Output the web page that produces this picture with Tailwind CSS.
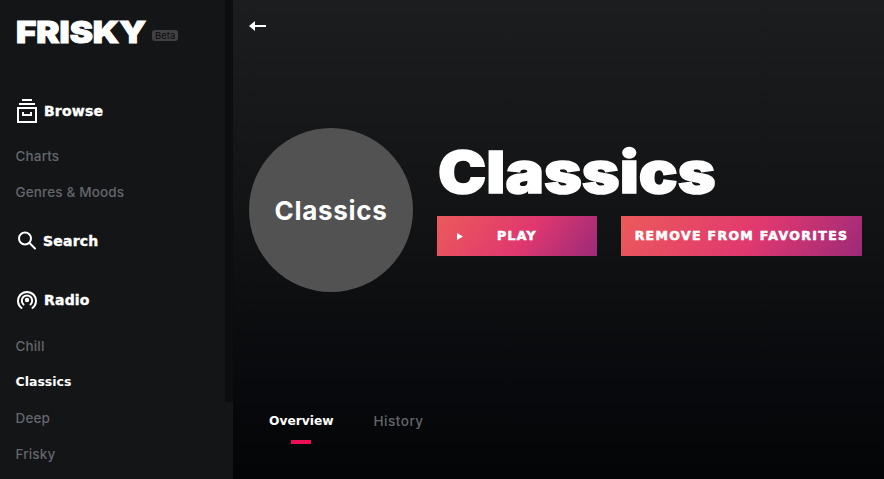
<!DOCTYPE html>
<html lang="en">
<head>
    <meta charset="UTF-8">
    <title>Frisky - Classics</title>
    <script src="https://cdn.jsdelivr.net/npm/@tailwindcss/browser@4"></script>
</head>
<body class="bg-[#040507] font-['Inter',sans-serif] overflow-hidden">
    <div class="flex h-[479px] w-[884px] overflow-hidden">

        <!-- Sidebar -->
        <aside class="relative w-[233px] shrink-0 bg-[#141517] pl-[16px]">
            <div class="absolute right-0 top-0 h-[402px] w-[8px] bg-[#0c0d0f]"></div>

            <div class="flex h-[33px] mt-[15px] items-center">
                <span class="w-[130px] origin-left scale-x-[1.16] text-[30px] leading-none font-black text-white [-webkit-text-stroke:1px_white]">FRISKY</span>
                <span class="ml-[6px] mt-[8px] rounded-[3px] bg-[#414143] px-[3px] text-[9.500px] leading-[11px] text-[#0c0c0e]">Beta</span>
            </div>

            <div class="flex items-center mt-[49px] h-[28px]">
                <svg class="w-[20px] h-[24px] mr-[7px] ml-[1px]" viewBox="0 0 20 24" fill="none" stroke="white" stroke-width="2">
                    <path d="M5 1h10M2 5h16M1 9h18v14H1zM6 13v3h8v-3"/>
                </svg>
                <span class="font-['DejaVu_Sans'] text-[14px] font-bold tracking-[0.2px] text-white [-webkit-text-stroke:0.4px_white]">Browse</span>
            </div>
            <ul class="mt-[13px] -ml-[0.5px] text-[13.5px] leading-[36px] font-medium tracking-[0.15px] text-[#63666c]">
                <li>Charts</li>
                <li>Genres &amp; Moods</li>
            </ul>

            <div class="flex items-center mt-[17px] h-[28px]">
                <svg class="w-[20px] h-[22px] mr-[6px] ml-[1px]" viewBox="0 0 20 22" fill="none" stroke="white" stroke-width="2">
                    <circle cx="8" cy="8.500" r="6"/>
                    <path d="M12.500 13l5.500 5.500" stroke-linecap="round"/>
                </svg>
                <span class="font-['DejaVu_Sans'] text-[14px] font-bold tracking-[0.2px] text-white [-webkit-text-stroke:0.4px_white]">Search</span>
            </div>

            <div class="flex items-center mt-[31px] h-[28px]">
                <svg class="w-[20px] h-[20px] mr-[7px] ml-[1px]" viewBox="0 0 20 20" fill="none" stroke="white" stroke-width="2" stroke-linecap="round">
                    <path d="M4.500 18a9 9 0 1 1 11 0"/>
                    <path d="M6.500 14.500a5.200 5.200 0 1 1 7 0"/>
                    <circle cx="10" cy="10" r="1.200"/>
                </svg>
                <span class="font-['DejaVu_Sans'] text-[14px] font-bold tracking-[0.2px] text-white [-webkit-text-stroke:0.4px_white]">Radio</span>
            </div>
            <ul class="mt-[14px] -ml-[0.5px] text-[13.5px] leading-[36px] font-medium tracking-[0.15px] text-[#63666c]">
                <li>Chill</li>
                <li class="font-['DejaVu_Sans'] text-[12.5px] font-bold tracking-normal text-white">Classics</li>
                <li>Deep</li>
                <li>Frisky</li>
            </ul>
        </aside>

        <!-- Main -->
        <main class="flex-1 bg-gradient-to-b from-[#1c1d1f] via-[#111214] via-50% to-[#040507] pl-[16px]">
            <svg class="w-[18px] h-[12px] mt-[20px]" viewBox="0 0 18 12" fill="white">
                <path d="M0 6l6-5v4h11v2H6v4z"/>
            </svg>

            <div class="flex mt-[96px]">
                <div class="flex h-[164px] w-[164px] items-center justify-center rounded-full bg-[#525252]">
                    <span class="text-[26px] font-bold tracking-[0.7px] text-white">Classics</span>
                </div>
                <div class="ml-[24px] mt-[14px]">
                    <h1 class="origin-left pl-[1px] scale-x-[1.112] text-[58px] leading-[60px] font-black text-white [-webkit-text-stroke:1.5px_white]">Classics</h1>
                    <div class="flex mt-[14px] gap-[24px]">
                        <button class="relative h-[40px] w-[160px] bg-[linear-gradient(125deg,#ec5a5a,#e0386f_55%,#9c2a78)] pt-[1px] font-['DejaVu_Sans'] text-[12.5px] font-bold tracking-[1.35px] text-white [-webkit-text-stroke:0.6px_white]">
                            <svg class="absolute left-[20px] top-[17px] w-[6px] h-[7px]" viewBox="0 0 6 7" fill="white"><path d="M0 0l6 3.500L0 7z"/></svg>
                            PLAY
                        </button>
                        <button class="h-[40px] w-[241px] bg-[linear-gradient(125deg,#ec5a5a,#e0386f_55%,#9c2a78)] pt-[1px] font-['DejaVu_Sans'] text-[12.5px] font-bold tracking-[1.35px] text-white [-webkit-text-stroke:0.6px_white]">REMOVE FROM FAVORITES</button>
                    </div>
                </div>
            </div>

            <div class="flex mt-[119px] pl-[20px] gap-[40px] text-[13.5px]">
                <div class="flex flex-col items-center">
                    <span class="font-['DejaVu_Sans'] text-[12.25px] font-bold text-white leading-[20px]">Overview</span>
                    <span class="mt-[9px] h-[4px] w-[20px] bg-[#ec0f56]"></span>
                </div>
                <span class="font-medium tracking-[0.5px] text-[#63666c] leading-[20px]">History</span>
            </div>
        </main>
    </div>
</body>
</html>
